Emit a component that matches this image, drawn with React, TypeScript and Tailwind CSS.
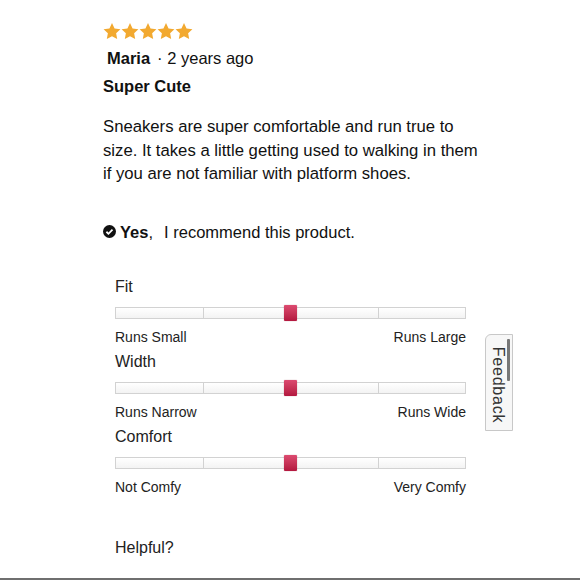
import React from "react";

function Star() {
  return (
    <svg width="18" height="18" viewBox="0 0 24 23">
      <path d="M12 0.8l3.4 7.2 7.8 1-5.7 5.4 1.4 7.8L12 18.4l-6.9 3.8 1.4-7.8L0.8 9l7.8-1z" fill="#f2a930" />
    </svg>
  );
}

function Slider({ title, left, right }: { title: string; left: string; right: string }) {
  return (
    <div className="flex flex-col w-[351px]">
      <div className="h-[20px] leading-[20px] text-[16px] text-[#222]">{title}</div>
      <div className="relative mt-[10px] h-[12px] border border-[#d2d2d2] bg-gradient-to-b from-white to-[#f3f3f3] flex">
        <div className="flex-1 border-r border-[#d2d2d2]" />
        <div className="flex-1 border-r border-[#d2d2d2]" />
        <div className="flex-1 border-r border-[#d2d2d2]" />
        <div className="flex-1" />
        <div className="absolute left-[168px] top-[-3px] w-[13px] h-[16px] rounded-[1px] bg-gradient-to-b from-[#dc4a70] to-[#b3173f] shadow-[0_0_1px_rgba(120,0,30,0.6)]" />
      </div>
      <div className="mt-[9px] h-[18px] leading-[18px] flex justify-between text-[14px] text-[#222]">
        <span>{left}</span>
        <span>{right}</span>
      </div>
    </div>
  );
}

export default function App() {
  return (
    <div
      className="relative w-[580px] h-[580px] bg-white overflow-hidden border-b-2 border-[#6f6f6f]"
      style={{ fontFamily: '"Liberation Sans", Arial, sans-serif' }}
    >
      <div className="flex flex-col pl-[103px] pt-[22px] text-[#111]">
        <div className="flex h-[18px] gap-0">
          <Star />
          <Star />
          <Star />
          <Star />
          <Star />
        </div>
        <div className="mt-[6px] h-[24px] leading-[24px] text-[16.5px] pl-[4px] flex">
          <span className="font-bold">Maria</span>
          <span className="ml-[7px]">· 2 years ago</span>
        </div>
        <div className="mt-[4px] h-[24px] leading-[24px] text-[16.5px] font-bold">Super Cute</div>
        <p className="mt-[17px] w-[382px] text-[16.7px] leading-[23.5px]">
          Sneakers are super comfortable and run true to size. It takes a little getting used to walking in them if you
          are not familiar with platform shoes.
        </p>
        <div className="mt-[34px] h-[24px] leading-[24px] text-[16.5px] flex items-center">
          <svg width="13" height="13" viewBox="0 0 16 16" className="mr-[4px]">
            <circle cx="8" cy="8" r="8" fill="#111" />
            <path d="M4.2 8.3l2.5 2.5 5-5" stroke="#fff" strokeWidth="2.2" fill="none" />
          </svg>
          <span className="font-bold">Yes</span>
          <span>,</span>
          <span className="ml-[11px]">I recommend this product.</span>
        </div>
        <div className="mt-[33px] pl-[12px] flex flex-col gap-[6px]">
          <Slider title="Fit" left="Runs Small" right="Runs Large" />
          <Slider title="Width" left="Runs Narrow" right="Runs Wide" />
          <Slider title="Comfort" left="Not Comfy" right="Very Comfy" />
        </div>
        <div className="mt-[42px] pl-[12px] h-[20px] leading-[20px] text-[16px] text-[#222]">Helpful?</div>
      </div>

      <div className="absolute left-[485px] top-[334px] w-[28px] h-[97px] rounded-tl-[6px] border border-[#c8c8c8] bg-[#f7f7f7]">
        <div className="absolute left-[21px] top-[4px] w-[3px] h-[42px] bg-[#777] rounded-[1px]" />
        <div className="absolute left-[-28px] top-[40px] w-[80px] h-[20px] leading-[20px] text-center rotate-90 text-[16px] text-[#333] whitespace-nowrap tracking-[0.8px]">
          Feedback
        </div>
      </div>
    </div>
  );
}
